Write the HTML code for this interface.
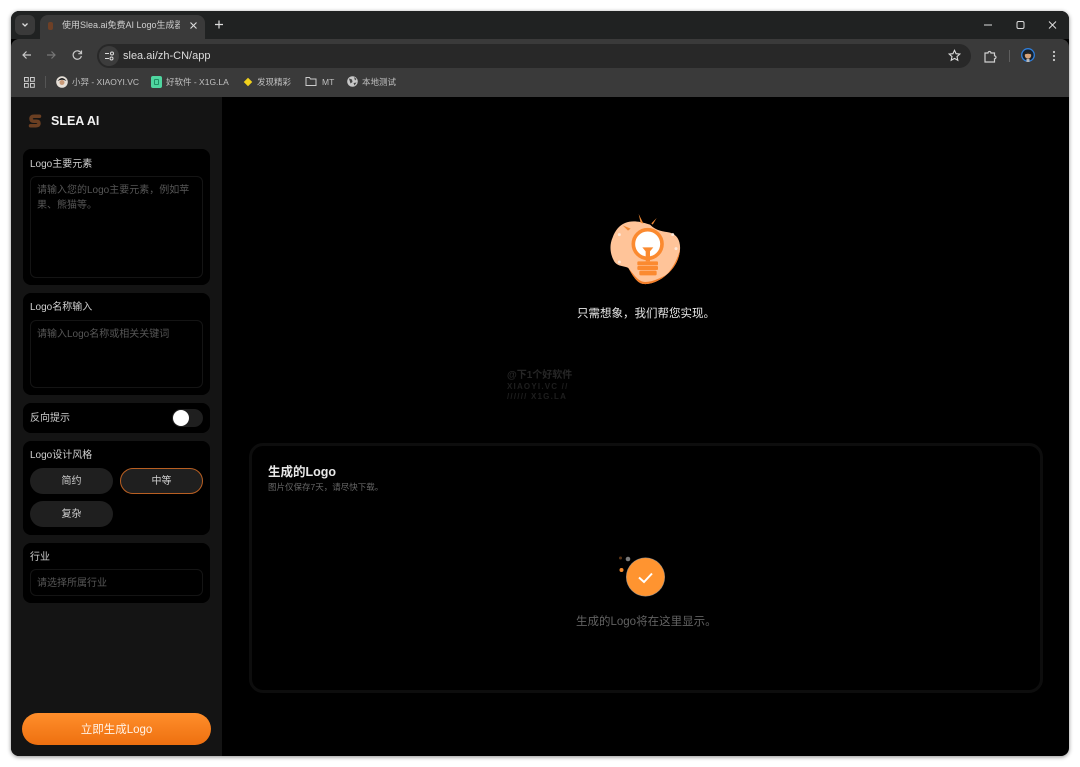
<!DOCTYPE html>
<html lang="zh-CN"><head><meta charset="utf-8"><title>SLEA AI</title>
<style>
*{box-sizing:border-box;margin:0;padding:0}
html,body{width:1080px;height:767px;background:#fff;overflow:hidden;font-family:"Liberation Sans","Noto Sans CJK SC",sans-serif}
.a{position:absolute}
.t{position:absolute;white-space:nowrap;line-height:14px}
#win{position:absolute;left:11px;top:11px;width:1058px;height:745px;border-radius:8px;overflow:hidden;background:#000;box-shadow:0 1px 4px rgba(0,0,0,.45);filter:blur(.35px)}
.card{position:absolute;left:12px;width:187px;background:#000;border-radius:8px}
.lab{position:absolute;left:7px;font-size:10px;color:#cfcfcf;white-space:nowrap;line-height:14px}
.box{position:absolute;left:7px;width:173px;border:1px solid #141414;border-radius:6px;background:#000}
.ph{position:absolute;left:6px;font-size:10px;line-height:15px;color:#565656}
.pill{position:absolute;height:26px;width:83px;border-radius:13px;background:#1f1f1f;color:#d0d0d0;font-size:10px;line-height:28px;text-align:center}
svg{position:absolute;overflow:visible}
</style></head><body>
<div id="win">
<!-- title bar -->
<div class="a" style="left:0;top:0;width:1058px;height:28px;background:#202222"></div>
<div class="a" style="left:4px;top:4px;width:20px;height:20px;border-radius:6px;background:#3a3a3a"></div>
<svg style="left:0;top:0" width="60" height="30"><path d="M11.500 12.500l2.500 2.500 2.500-2.500" fill="none" stroke="#ddd" stroke-width="1.300"/></svg>
<div class="a" style="left:29px;top:4px;width:165px;height:26px;border-radius:8px 8px 0 0;background:#3a3a3a"></div>
<div class="a" style="left:37px;top:11px;width:5px;height:8px;border-radius:2px;background:#6e4026"></div>
<div class="t" style="left:51px;top:7px;width:118px;overflow:hidden;font-size:9px;color:#cfcfcf">使用Slea.ai免费AI Logo生成器</div>
<svg style="left:178px;top:10px" width="10" height="10"><path d="M1.500 1.500l6 6M7.500 1.500l-6 6" stroke="#ddd" stroke-width="1.100"/></svg>
<svg style="left:202px;top:8px" width="12" height="12"><path d="M6 1.500v8M2 5.500h8" stroke="#ddd" stroke-width="1.200"/></svg>
<svg style="left:960px;top:4px" width="96" height="20"><path d="M13 10h8" stroke="#ddd" stroke-width="1"/><rect x="46" y="6.500" width="7" height="7" rx="1.500" fill="none" stroke="#ddd" stroke-width="1"/><path d="M78 6.500l7 7M85 6.500l-7 7" stroke="#ddd" stroke-width="1"/></svg>
<!-- toolbar -->
<div class="a" style="left:0;top:28px;width:1058px;height:58px;background:#3a3a3a;border-radius:8px 8px 0 0"></div>
<svg style="left:0;top:28px" width="90" height="32"><path d="M20 16h-8M15.500 12.500l-3.500 3.500 3.500 3.500" fill="none" stroke="#c8c8c8" stroke-width="1.200"/><path d="M36 16h8M40.500 12.500l3.500 3.500-3.500 3.500" fill="none" stroke="#777" stroke-width="1.200"/><path d="M70 14a4.200 4.200 0 1 0 .4 3" fill="none" stroke="#c8c8c8" stroke-width="1.200"/><path d="M70.500 11.500v3.200h-3.200" fill="none" stroke="#c8c8c8" stroke-width="1.200"/></svg>
<div class="a" style="left:86px;top:33px;width:874px;height:24px;border-radius:12px;background:#282828"></div>
<div class="a" style="left:88px;top:35px;width:20px;height:20px;border-radius:10px;background:#3c3c3c"></div>
<svg style="left:88px;top:35px" width="20" height="20"><path d="M6 7.500h4M10 12.500h-4" stroke="#ddd" stroke-width="1"/><circle cx="13" cy="7.500" r="1.500" fill="none" stroke="#ddd" stroke-width="1"/><circle cx="12.500" cy="12.500" r="1.500" fill="none" stroke="#ddd" stroke-width="1"/></svg>
<div class="t" style="left:112px;top:38px;font-size:11px;color:#dcdcdc">slea.ai/zh-CN/app</div>
<svg style="left:937px;top:38px" width="13" height="13"><path d="M6.500 1.300l1.600 3.400 3.700.4-2.800 2.500.8 3.700-3.300-1.900-3.300 1.900.8-3.700L1.200 5.100l3.700-.4z" fill="none" stroke="#ddd" stroke-width="1.100"/></svg>
<svg style="left:972px;top:38px" width="14" height="14"><path d="M2 4h3a1.500 1.500 0 0 1 3 0h3.500v2.800a1.500 1.500 0 0 1 0 3V13H2z" fill="none" stroke="#d0d0d0" stroke-width="1.200"/></svg>
<div class="a" style="left:998px;top:39px;width:1px;height:12px;background:#5e5e5e"></div>
<svg style="left:1010px;top:37px" width="14" height="15"><circle cx="7" cy="7" r="6.300" fill="#16202c" stroke="#2f7fdc" stroke-width="1.300"/><circle cx="7" cy="7.500" r="3.200" fill="#d4a27a"/><path d="M3.500 6.500Q7 2 10.500 6.500Q7 4.800 3.500 6.500z" fill="#111"/><rect x="5.500" y="11" width="3" height="3" fill="#b8b8b8"/></svg>
<svg style="left:1040px;top:38px" width="6" height="14"><circle cx="3" cy="3" r="1.100" fill="#ccc"/><circle cx="3" cy="7" r="1.100" fill="#ccc"/><circle cx="3" cy="11" r="1.100" fill="#ccc"/></svg>
<!-- bookmarks -->
<svg style="left:13px;top:66px" width="11" height="11"><g fill="none" stroke="#ccc" stroke-width="1"><rect x=".5" y=".5" width="3.800" height="3.800"/><rect x="6.500" y=".5" width="3.800" height="3.800"/><rect x=".5" y="6.500" width="3.800" height="3.800"/><rect x="6.500" y="6.500" width="3.800" height="3.800"/></g></svg>
<div class="a" style="left:34px;top:65px;width:1px;height:12px;background:#555"></div>
<svg style="left:45px;top:65px" width="12" height="12"><circle cx="6" cy="6" r="5.800" fill="#e6e0d8"/><path d="M1.500 5Q6-1 10.500 5Q6 2.500 1.500 5z" fill="#222"/><circle cx="6" cy="6.500" r="2.500" fill="#c99a78"/></svg>
<div class="t" style="left:61px;top:64px;font-size:8.500px;color:#c0c0c0">小羿 - XIAOYI.VC</div>
<div class="a" style="left:140px;top:65px;width:11px;height:12px;border-radius:2px;background:#4fd6a0"></div>
<div class="a" style="left:143px;top:68px;width:5px;height:6px;border:1px solid #1f8f63;border-radius:1px"></div>
<div class="t" style="left:155px;top:64px;font-size:8.500px;color:#c0c0c0">好软件 - X1G.LA</div>
<div class="a" style="left:234px;top:68px;width:6px;height:6px;background:#f2d21c;transform:rotate(45deg)"></div>
<div class="t" style="left:246px;top:64px;font-size:8.500px;color:#c0c0c0">发现精彩</div>
<svg style="left:294px;top:65px" width="12" height="11"><path d="M1 1.500h3.500l1 1.500h5.500v6.500H1z" fill="none" stroke="#ccc" stroke-width="1"/></svg>
<div class="t" style="left:311px;top:64px;font-size:8.500px;color:#c0c0c0">MT</div>
<svg style="left:336px;top:65px" width="11" height="11"><circle cx="5.500" cy="5.500" r="5.300" fill="#c8c8c8"/><path d="M2 2.500l3 1 .5 2.500-2 1.500zM7 1l2.500 2-1.500 1.500zM6.500 7l3-.5-2 3z" fill="#444"/></svg>
<div class="t" style="left:351px;top:64px;font-size:8.500px;color:#c0c0c0">本地测试</div>
<!-- sidebar -->
<div class="a" style="left:0;top:86px;width:211px;height:659px;background:#141414"></div>
<svg style="left:18px;top:103px" width="12" height="14" viewBox="0 0 12 14"><path d="M10.500 2.200H5Q2 2.200 2 4.700T5 7.200H7.500Q10 7.200 10 9.400T7 11.700H1.500" fill="none" stroke="#6b3f22" stroke-width="3.500" stroke-linecap="round"/></svg>
<div class="t" style="left:40px;top:103px;font-size:12.500px;font-weight:700;color:#f2f2f2">SLEA AI</div>
<div class="card" style="top:138px;height:136px"><div class="lab" style="top:9px">Logo主要元素</div>
<div class="box" style="top:27px;height:102px"><div class="ph" style="top:6px;width:160px">请输入您的Logo主要元素，例如苹果、熊猫等。</div></div></div>
<div class="card" style="top:282px;height:102px"><div class="lab" style="top:8px">Logo名称输入</div>
<div class="box" style="top:27px;height:68px"><div class="ph" style="top:6px;white-space:nowrap">请输入Logo名称或相关关键词</div></div></div>
<div class="card" style="top:392px;height:30px"><div class="lab" style="top:9px">反向提示</div>
<div class="a" style="left:149px;top:6px;width:31px;height:18px;border-radius:9px;background:#1f1f1f"></div>
<div class="a" style="left:150px;top:7px;width:16px;height:16px;border-radius:50%;background:#fff"></div></div>
<div class="card" style="top:430px;height:94px"><div class="lab" style="top:8px">Logo设计风格</div>
<div class="pill" style="left:7px;top:27px">简约</div>
<div class="pill" style="left:97px;top:27px;border:1px solid #b85f22;line-height:26px">中等</div>
<div class="pill" style="left:7px;top:60px">复杂</div></div>
<div class="card" style="top:532px;height:60px"><div class="lab" style="top:8px">行业</div>
<div class="box" style="top:26px;height:27px"><div class="ph" style="top:6px;white-space:nowrap">请选择所属行业</div></div></div>
<div class="a" style="left:11px;top:702px;width:189px;height:32px;border-radius:16px;background:linear-gradient(#ff8e2b,#ee7010);color:#fff2e6;font-size:11.500px;line-height:34px;text-align:center">立即生成Logo</div>
<!-- hero -->
<svg style="left:589px;top:197px" width="90" height="80" viewBox="0 0 270 240">
<path d="M75 45C95 38 112 38 150 50C170 70 190 70 210 74C232 80 242 100 240 125C238 155 222 182 200 200C180 218 155 230 130 228C110 225 100 205 85 180C70 172 50 178 40 155C30 135 28 110 38 88C45 68 58 52 75 45Z" fill="#ffc499"/>
<path d="M200 200C180 218 155 230 130 228C110 225 100 205 85 180C100 198 115 222 135 222C160 222 185 208 200 200Z" fill="#f47f2a"/>
<path d="M240 125C238 155 222 182 200 200C218 180 232 155 240 125Z" fill="#f47f2a"/>
<path d="M116 18L130 46L122 45ZM170 30L158 50L154 46ZM68 52L92 62L84 68Z" fill="#f28a35"/>
<circle cx="143" cy="108" r="43" fill="#fff" stroke="#fb8a30" stroke-width="11"/>
<path d="M127 118L160 118L150 130L150 160H137L137 130Z" fill="#fb8a30"/>
<rect x="112" y="160" width="62" height="12" rx="3" fill="#fb8a30"/><rect x="112" y="174" width="62" height="12" rx="3" fill="#fb8a30"/><rect x="118" y="188" width="52" height="14" rx="4" fill="#fb8a30"/>
<circle cx="58" cy="80" r="4.500" fill="#ffe9d9"/><circle cx="58" cy="162" r="4.500" fill="#ffe9d9"/><circle cx="228" cy="122" r="4.500" fill="#ffe9d9"/><circle cx="218" cy="80" r="4.500" fill="#ffe9d9"/>
</svg>
<div class="t" style="left:566px;top:296px;font-size:11.500px;color:#e6e6e6">只需想象，我们帮您实现。</div>
<!-- watermark -->
<div class="t" style="left:496px;top:358px;font-size:10px;font-weight:700;color:#262626">@下1个好软件</div>
<div class="t" style="left:496px;top:371px;font-size:8px;font-weight:700;letter-spacing:1.200px;color:#1e1e1e;line-height:10px">XIAOYI.VC //<br>////// X1G.LA</div>
<!-- panel -->
<div class="a" style="left:238px;top:432px;width:794px;height:250px;border:3px solid #0d0d0d;border-radius:14px;background:#000"></div>
<div class="t" style="left:257px;top:454px;font-size:12.500px;font-weight:700;color:#e8e8e8">生成的Logo</div>
<div class="t" style="left:257px;top:469px;font-size:8.500px;color:#666">图片仅保存7天，请尽快下载。</div>
<svg style="left:600px;top:540px" width="60" height="50">
<circle cx="34.500" cy="26" r="19.500" fill="#8a8a8a"/>
<circle cx="34.500" cy="26" r="19" fill="#ff9430"/>
<path d="M28 26.500l5 4.500 8-8.500" fill="none" stroke="#fff" stroke-width="2"/>
<circle cx="17" cy="8" r="2.300" fill="#7a7a7a"/><circle cx="9.500" cy="7" r="1.500" fill="#5a3417"/><circle cx="10.500" cy="19" r="2" fill="#f28a30"/>
</svg>
<div class="t" style="left:565px;top:604px;font-size:11.500px;color:#626262">生成的Logo将在这里显示。</div>
</div>
</body></html>
